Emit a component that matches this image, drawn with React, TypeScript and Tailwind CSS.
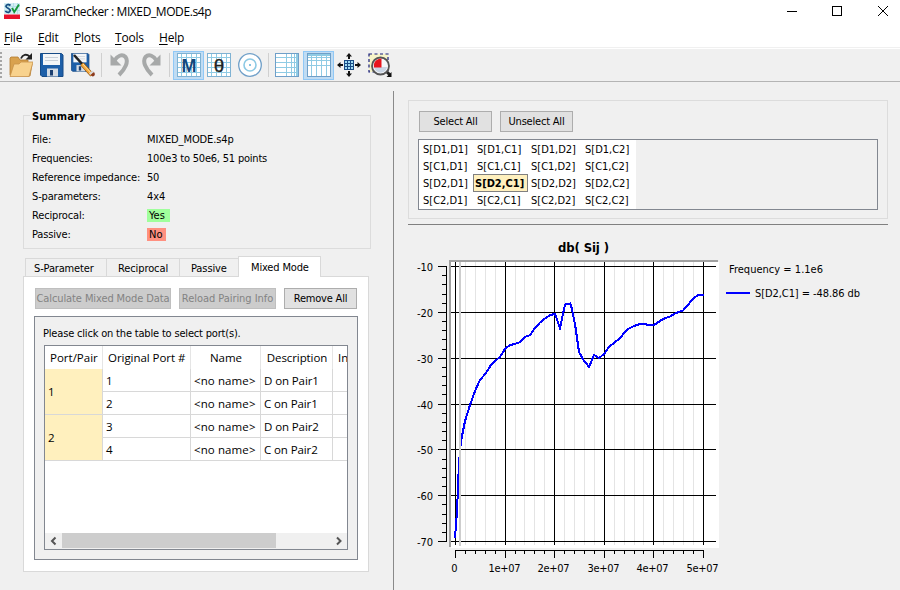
import type { ReactNode } from "react";

const MENU = [
  { label: "File", css: "w-[34px]" },
  { label: "Edit", css: "w-[36px]" },
  { label: "Plots", css: "w-[41px]" },
  { label: "Tools", css: "w-[44px]" },
  { label: "Help", css: "w-[40px]" },
];

const SUMMARY = [
  { label: "File:", value: "MIXED_MODE.s4p", css: "tracking-[-0.1px]" },
  { label: "Frequencies:", value: "100e3 to 50e6, 51 points", css: "tracking-[-0.2px]" },
  { label: "Reference impedance:", value: "50", css: "tracking-[-0.3px]" },
  { label: "S-parameters:", value: "4x4", css: "tracking-[-0.1px]" },
  { label: "Reciprocal:", value: "Yes", css: "w-[23px] bg-[#a0ff9c] pl-[2px]" },
  { label: "Passive:", value: "No", css: "w-[19px] bg-[#ff9080] pl-[2px]" },
];

const PORTS = [
  { port: "1", desc: "D on Pair1" },
  { port: "2", desc: "C on Pair1" },
  { port: "3", desc: "D on Pair2" },
  { port: "4", desc: "C on Pair2" },
];

const PORT_NAMES = ["D1", "C1", "D2", "C2"];

// Chart geometry, in pixels of the plot svg (origin at 408,230)
const X_MAJOR = [47, 97, 146, 196, 245, 295];
const Y_MAJOR = [36, 82, 128, 174, 219, 265, 311];
const X_LABELS = ["0", "1e+07", "2e+07", "3e+07", "4e+07", "5e+07"];
const Y_LABELS = ["-10", "-20", "-30", "-40", "-50", "-60", "-70"];

const CURVE =
  "47,308 49,282 51,232 53,211 55,201 57,191 62,175 67,161 72,150 78,143 83,135 87,131 92,127 97,119 102,115 107,114 112,112 117,107 122,105 127,98 132,92.5 137,88.5 142,85 147,84 152,98 157,74.5 162,73.5 163,75 167,94 171,122 175.5,130 181,137 186,125 191,128 196,124 201,117 207,112 212,108.5 216,103 221,98.5 226,96 232,94 237,94 240,95 246,95 255,89 262,86.5 267,83.5 275,80.5 285,69 290,65 296,65";

const Icon = ({ children }: { children: ReactNode }) => (
  <svg width="24" height="24" viewBox="0 0 24 24" className="shrink-0">
    {children}
  </svg>
);

const Separator = () => <div className="h-6 w-px shrink-0 bg-[#d0d0d0]" />;

const Accel = ({ text }: { text: string }) => (
  <span>
    <span className="underline underline-offset-2">{text[0]}</span>
    {text.slice(1)}
  </span>
);

const TitleBar = () => (
  <header className="flex h-[28px] items-start bg-white font-['Open_Sans','Noto_Sans',sans-serif] text-[12px]">
    <svg width="16" height="16" viewBox="0 0 16 16" className="ml-1 mt-[3px]">
      <rect width="16" height="11" fill="#d5eef3" />
      <path d="M0 3.5h16M0 7.5h16M4.5 0v11M9.5 0v11M13.5 0v11" stroke="#b4dfe8" />
      <rect y="11.5" width="16" height="4.5" fill="#e8112d" />
      <path d="M6.500 2.500C5 1 1.800 1.500 2 3.500S6.500 5 6.200 7.500 2.800 9.800 1.300 8" fill="none" stroke="#174f84" strokeWidth="1.8" />
      <path d="M8 5l2.300 4L15 1.500" fill="none" stroke="#17973a" strokeWidth="1.9" />
    </svg>
    <h1 className="ml-[5px] mt-[3px] whitespace-nowrap leading-[18px] tracking-[-0.4px]">
      SParamChecker : MIXED_MODE.s4p
    </h1>
    <svg width="113" height="24" viewBox="0 0 113 24" className="ml-auto mr-0" shapeRendering="crispEdges">
      <path d="M0 11.5h10" stroke="#000" />
      <rect x="45.5" y="6.5" width="9" height="9" fill="none" stroke="#000" />
      <path d="M91 6l10 10M101 6L91 16" stroke="#000" shapeRendering="auto" />
    </svg>
  </header>
);

const MenuBar = () => (
  <nav className="flex h-[19px] bg-white pl-1 font-['Open_Sans','Noto_Sans',sans-serif] text-[12px] leading-[20px] tracking-[-0.2px]">
    {MENU.map((m) => (
      <div key={m.label} className={m.css}>
        <Accel text={m.label} />
      </div>
    ))}
  </nav>
);

const Floppy = () => (
  <>
    <path d="M0.500 0.500h21l1.500 1.500v21.500H2L0.500 22z" fill="#1d5fa8" stroke="#174b86" />
    <rect x="3" y="1" width="17" height="11" fill="#f4f6f8" />
    <path d="M5 4.500h13M5 7.500h13" stroke="#c9d0d8" />
    <rect x="7" y="15.500" width="11" height="8" fill="#d5dce4" />
    <rect x="10" y="17" width="3" height="5.500" fill="#1b3f70" />
  </>
);

const GridIcon = () => (
  <>
    <rect x="0.500" y="0.500" width="23" height="23" fill="#fff" stroke="#7fb2d3" />
    <path
      d="M4.500 1v22M9.500 1v22M14.500 1v22M19.500 1v22M1 4.500h22M1 9.500h22M1 14.500h22M1 19.500h22"
      stroke="#8fcbe4"
      shapeRendering="crispEdges"
    />
  </>
);

const Toolbar = () => (
  <div className="flex h-[33px] items-center border-b border-[#b4b4b4] bg-[#f0f0f0]">
    <svg width="3" height="28" viewBox="0 0 3 28" className="mr-[6px] shrink-0">
      <path d="M1 1v26" stroke="#a6a6a6" strokeWidth="2" strokeDasharray="2 2" />
    </svg>
    <Icon>
      <path d="M1 22V5l1-1h7l2 3h8v4h4l-2 12z" fill="#d9a24e" stroke="#b27b31" strokeWidth=".8" />
      <path d="M1 23.500L5 11h5l2-2h12l-4 14.500z" fill="#f8d28d" stroke="#c8924a" strokeWidth=".8" />
      <path d="M12 5.500c1.500-4 5.500-5 8.500-2" fill="none" stroke="#222" strokeWidth="1.800" />
      <path d="M23 0v6.500h-6.500z" fill="#222" />
    </Icon>
    <div className="ml-[7px] flex">
      <Icon>
        <Floppy />
      </Icon>
    </div>
    <div className="ml-[7px] flex">
      <Icon>
        <g transform="scale(.78)">
          <Floppy />
        </g>
        <path d="M3 2l10 11" stroke="#222" strokeWidth="2.600" />
        <path d="M11 11l10 11" stroke="#9a5a12" strokeWidth="4.200" />
        <path d="M11 11l10 11" stroke="#f5a93c" strokeWidth="3" />
        <path d="M12 11l9 10" stroke="#ffe0a0" strokeWidth="1" />
        <path d="M18 20.500l3.500-3 1.500 1.500-3.500 3z" fill="#d8d8d8" />
        <path d="M19.500 22l3.500-3c1.500 2 1 4.500-1.500 4.500z" fill="#8c3b20" />
      </Icon>
    </div>
    <div className="ml-[6px] flex items-center">
      <Separator />
    </div>
    <div className="ml-[7px] flex">
      <Icon>
        <path d="M1.500 1.500v11h11z" fill="#a7a9a9" />
        <path d="M5.500 7.500C8 3 13 .5 16.500 4c3.500 4.500-.5 12-6.500 18" fill="none" stroke="#a7a9a9" strokeWidth="4" />
      </Icon>
    </div>
    <div className="ml-[6px] flex">
      <Icon>
        <path d="M21.500 1.500v11h-11z" fill="#a7a9a9" />
        <path d="M17.500 7.500C15 3 10 .5 6.500 4 3 8.500 7 16 13 22" fill="none" stroke="#a7a9a9" strokeWidth="4" />
      </Icon>
    </div>
    <div className="ml-[6px] flex">
      <Separator />
    </div>
    <div className="ml-[3px] flex h-[29px] w-[31px] shrink-0 items-center justify-center border border-[#90c8f6] bg-[#c0dcf3]">
      <Icon>
        <GridIcon />
        <text x="12" y="18.500" textAnchor="middle" className="font-['Liberation_Sans',sans-serif] text-[18px] font-bold" fill="#12477c">
          M
        </text>
      </Icon>
    </div>
    <div className="ml-[3px] flex">
      <Icon>
        <GridIcon />
        <text x="12" y="18.500" textAnchor="middle" className="font-['Liberation_Sans',sans-serif] text-[19px]" fill="#222" stroke="#222" strokeWidth=".3">
          θ
        </text>
      </Icon>
    </div>
    <div className="ml-[7px] flex">
      <Icon>
        <circle cx="12" cy="12" r="11.300" fill="#fff" stroke="#6f9fc8" strokeWidth="1.300" />
        <circle cx="12" cy="12" r="6" fill="none" stroke="#8cc9e4" strokeWidth="1.600" />
        <circle cx="12" cy="12" r="1" fill="#5fb0d8" />
      </Icon>
    </div>
    <div className="ml-[6px] flex">
      <Separator />
    </div>
    <div className="ml-[6px] flex">
      <Icon>
        <g shapeRendering="crispEdges">
          <rect x="0.500" y="0.500" width="23" height="23" fill="#fff" stroke="#6f9fc8" />
          <rect x="21" y="1" width="2" height="22" fill="#8fcbe4" />
          <path d="M1 4.500h22M1 9.500h22M1 14.500h22M1 19.500h22M11.500 1v22M16.500 1v22M19.500 1v22" stroke="#8fcbe4" />
        </g>
      </Icon>
    </div>
    <div className="ml-[4px] flex h-[29px] w-[31px] shrink-0 items-center justify-center border border-[#90c8f6] bg-[#c0dcf3]">
      <Icon>
        <g shapeRendering="crispEdges">
          <rect x="0.500" y="0.500" width="23" height="23" fill="#fff" stroke="#6f9fc8" />
          <rect x="1" y="1" width="22" height="2" fill="#8fcbe4" />
          <path d="M4.500 3v20M9.500 3v20M14.500 3v20M19.500 3v20M1 4.500h22M1 7.500h22M1 12.500h22" stroke="#8fcbe4" />
        </g>
      </Icon>
    </div>
    <div className="ml-[3px] flex">
      <Icon>
        <rect x="7" y="7" width="10" height="10" fill="#9fdcf5" />
        <path d="M7.500 7v10M10.500 7v10M13.500 7v10M16.500 7v10M7 7.500h10M7 10.500h10M7 13.500h10M7 16.500h10" stroke="#174b86" shapeRendering="crispEdges" />
        <path d="M12 0l3 3.500h-2V6h-2V3.500H9zM12 24l3-3.500h-2V18h-2v2.500H9zM0 12l3.500-3v2H6v2H3.500v2zM24 12l-3.500-3v2H18v2h2.500v2z" fill="#111" />
      </Icon>
    </div>
    <div className="ml-[7px] flex">
      <Icon>
        <rect x="1" y="1" width="19" height="18" fill="#f6f4c8" stroke="#171c78" strokeWidth="1.200" strokeDasharray="3 2.500" />
        <path d="M18 18l4 4" stroke="#222" strokeWidth="3" />
        <path d="M23.500 19v5h-5z" fill="#111" />
        <circle cx="12.500" cy="13" r="8.500" fill="#f5f7fa" stroke="#555" strokeWidth="1.800" />
        <path d="M6 14h13c-1 7-11 8-13 0z" fill="#c9d5e4" />
        <path d="M13.500 14.500H6c-1-5.500 2.500-9 7.500-9z" fill="#e8141c" />
      </Icon>
    </div>
  </div>
);

const Button = ({ css, disabled, children }: { css: string; disabled?: boolean; children: ReactNode }) => (
  <button
    disabled={disabled}
    className={`flex h-[21px] shrink-0 items-center justify-center whitespace-nowrap border pt-[2px] ${
      disabled ? "border-[#bfbfbf] bg-[#cccccc] text-[#838383]" : "border-[#adadad] bg-[#e1e1e1]"
    } ${css}`}
  >
    {children}
  </button>
);

const Summary = () => (
  <fieldset className="ml-[23px] mt-[27px] h-[140px] w-[348px] border border-[#dcdcdc] pl-[8px]">
    <legend className="h-[13px] px-[2px] pt-px text-[11px] font-bold leading-[13px] tracking-[0.1px] -ml-[2px]">Summary</legend>
    <div className="mt-[8px]">
      {SUMMARY.map((s) => (
        <div key={s.label} className="flex h-[19px] items-center">
          <span className="w-[115px] whitespace-nowrap pt-px tracking-[-0.15px]">{s.label}</span>
          <span className={`whitespace-nowrap leading-[13px] ${s.css}`}>{s.value}</span>
        </div>
      ))}
    </div>
  </fieldset>
);

const Tabs = () => (
  <div className="ml-[25px] mt-[7px] flex h-[20px] items-end">
    <div className="h-[18px] w-[82px] border border-b-0 border-[#d9d9d9] pl-[8px] leading-[19px] tracking-[-0.15px]">S-Parameter</div>
    <div className="h-[18px] w-[73px] border-r border-t border-[#d9d9d9] pl-[11px] leading-[19px] tracking-[-0.1px]">Reciprocal</div>
    <div className="h-[18px] w-[58px] border-t border-[#d9d9d9] pl-[11px] leading-[19px] tracking-[-0.1px]">Passive</div>
    <div className="relative z-10 -mb-px h-[21px] w-[83px] border border-b-0 border-[#d9d9d9] bg-white pl-[12px] leading-[21px] tracking-[-0.15px]">
      Mixed Mode
    </div>
  </div>
);

const PortTable = () => (
  <div className="ml-[9px] flex h-[205px] w-[304px] flex-col overflow-hidden border border-[#828790] bg-white font-['Open_Sans','Noto_Sans',sans-serif] text-[11.500px]">
    <div className="flex h-[23px] shrink-0 whitespace-nowrap leading-[23px]">
      <div className="w-[58px] shrink-0 border-r border-[#e5e5e5] pl-[5px]">Port/Pair</div>
      <div className="w-[88px] shrink-0 border-r border-[#e5e5e5] pl-[5px] tracking-[-0.05px]">Original Port #</div>
      <div className="w-[70px] shrink-0 border-r border-[#e5e5e5] pl-px text-center">Name</div>
      <div className="w-[72px] shrink-0 border-r border-[#e5e5e5] pl-px text-center tracking-[-0.1px]">Description</div>
      <div className="shrink-0 pl-[5px]">In</div>
    </div>
    <div className="flex">
      <div className="w-[58px] shrink-0">
        {["1", "2"].map((pair) => (
          <div key={pair} className="flex h-[46px] items-center border-b border-r border-[#d8d8d8] bg-[#fff0be] pl-[3px]">
            {pair}
          </div>
        ))}
      </div>
      <div className="shrink-0">
        {PORTS.map((p) => (
          <div key={p.port} className="flex h-[23px] whitespace-nowrap border-b border-[#d8d8d8] leading-[23px]">
            <div className="w-[88px] border-r border-[#d8d8d8] pl-[3px]">{p.port}</div>
            <div className="w-[70px] border-r border-[#d8d8d8] pl-[3px] tracking-[0.1px]">&lt;no name&gt;</div>
            <div className="w-[72px] border-r border-[#d8d8d8] pl-[3px] tracking-[-0.1px]">{p.desc}</div>
            <div className="w-[14px]" />
          </div>
        ))}
      </div>
    </div>
    <div className="mt-auto flex h-[16px] shrink-0 items-stretch bg-[#f0f0f0]">
      <svg width="17" height="16" viewBox="0 0 17 16">
        <path d="M10.500 4.500L7 8l3.500 3.500" fill="none" stroke="#555" strokeWidth="2" />
      </svg>
      <div className="mb-px w-[214px] bg-[#cdcdcd]" />
      <svg width="17" height="16" viewBox="0 0 17 16" className="ml-auto">
        <path d="M7 4.500l3.500 3.500L7 11.500" fill="none" stroke="#555" strokeWidth="2" />
      </svg>
    </div>
  </div>
);

const MixedModePane = () => (
  <div className="ml-[23px] h-[296px] w-[346px] border border-[#d9d9d9] bg-white pl-[10px] pt-[11px]">
    <div className="flex pl-[1px]">
      <Button disabled css="w-[136px] tracking-[-0.1px]">Calculate Mixed Mode Data</Button>
      <Button disabled css="ml-[8px] w-[97px] tracking-[-0.05px]">Reload Pairing Info</Button>
      <Button css="ml-[8px] w-[73px] tracking-[-0.2px]">Remove All</Button>
    </div>
    <div className="mt-[7px] h-[244px] w-[324px] border border-[#828790] bg-[#f0f0f0]">
      <p className="h-[28px] pl-[8px] leading-[33px] tracking-[-0.18px]">Please click on the table to select port(s).</p>
      <PortTable />
    </div>
  </div>
);

const Selector = () => (
  <section className="h-[119px] w-[480px] border border-[#dcdcdc] pl-[9px] pt-[10px]">
    <div className="flex pl-[1px]">
      <Button css="w-[73px] tracking-[-0.2px]">Select All</Button>
      <Button css="ml-[8px] w-[73px] tracking-[-0.2px]">Unselect All</Button>
    </div>
    <div className="mt-[7px] h-[71px] w-[460px] border border-[#828790]">
      <div className="grid h-[69px] w-[217px] grid-cols-[repeat(4,54px)] grid-rows-[repeat(4,17px)] bg-white pt-px">
        {PORT_NAMES.flatMap((row) =>
          PORT_NAMES.map((col) => {
            const active = row === "D2" && col === "C1";
            return (
              <div
                key={row + col}
                className={
                  active
                    ? "h-[18px] w-[55px] -mt-px whitespace-nowrap border border-[#808080] bg-[#fff0be] pl-[1px] font-bold leading-[17px]"
                    : "pl-[4px] leading-[17px]"
                }
              >
                {`S[${row},${col}]`}
              </div>
            );
          }),
        )}
      </div>
    </div>
  </section>
);

const Chart = () => (
  <svg width="480" height="355" viewBox="0 0 480 355" className="block text-[11px]">
    <text x="150" y="22" textLength="51" className="text-[13px] font-bold">db( Sij )</text>

    <g shapeRendering="crispEdges">
      <rect x="43" y="32" width="268" height="286" fill="#fff" />
      <path d="M41 30h269v2H43v285h-2z" fill="#a0a0a0" />
      {Array.from({ length: 26 }, (_, i) => (
        <path key={i} d={`M${Math.round(47 + i * 9.92) + 0.5} 32v283`} stroke="#e4e4e4" />
      ))}
      {X_MAJOR.map((x) => (
        <path key={x} d={`M${x + 0.5} 32v283`} stroke="#000" />
      ))}
      {Y_MAJOR.map((y) => (
        <path key={y} d={`M43 ${y + 0.5}h265`} stroke="#000" />
      ))}

      {/* axes */}
      <path d="M38.500 36v276M47 320.500h249" stroke="#000" />
      {Array.from({ length: 31 }, (_, i) => (
        <path key={i} d={`M34 ${Math.round(36 + i * 9.17) + 0.5}h4`} stroke="#000" />
      ))}
      {Y_MAJOR.map((y) => (
        <path key={y} d={`M30 ${y + 0.5}h8`} stroke="#000" />
      ))}
      {Array.from({ length: 26 }, (_, i) => (
        <path key={i} d={`M${Math.round(47 + i * 9.92) + 0.5} 321v3`} stroke="#000" />
      ))}
      {X_MAJOR.map((x) => (
        <path key={x} d={`M${x + 0.5} 321v7`} stroke="#000" />
      ))}

      <polyline points={CURVE} fill="none" stroke="#0000ff" strokeWidth="2" />
      <rect x="51" y="32" width="2" height="284" fill="#cdcdcd" />
      <rect x="318" y="62" width="24" height="2" fill="#0000ff" />
    </g>

    {Y_LABELS.map((label, i) => (
      <text key={label} x="9" y={Y_MAJOR[i] + 5} textLength="16">
        {label}
      </text>
    ))}
    {X_LABELS.map((label, i) => (
      <text key={label} x={X_MAJOR[i] - 0.5} y="342" textAnchor="middle" textLength={i ? 32 : 6}>
        {label}
      </text>
    ))}
    <text x="321" y="43" textLength="94">Frequency = 1.1e6</text>
    <text x="347" y="67" textLength="105">S[D2,C1] = -48.86 db</text>
  </svg>
);

export default function App() {
  return (
    <div className="flex h-[590px] w-[900px] flex-col overflow-hidden bg-[#f0f0f0] font-['DejaVu_Sans_Condensed','DejaVu_Sans',sans-serif] text-[11px] text-black">
      <TitleBar />
      <MenuBar />
      <div className="h-[2px] shrink-0 border-b border-white bg-[#f0f0f0]" />
      <Toolbar />
      <main className="flex flex-1">
        <div className="w-[393px] shrink-0">
          <Summary />
          <Tabs />
          <MixedModePane />
        </div>
        <div className="mt-[9px] w-px shrink-0 bg-[#8a8a8a]" />
        <div className="ml-[14px] pt-[18px]">
          <Selector />
          <div className="mb-[5px] mt-[5px] h-px bg-[#808080]" />
          <Chart />
        </div>
      </main>
    </div>
  );
}
